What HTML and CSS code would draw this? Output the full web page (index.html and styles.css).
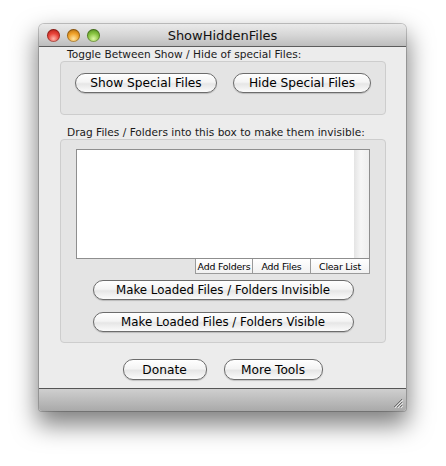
FILE: index.html
```html
<!DOCTYPE html>
<html lang="en">
<head>
    <meta charset="UTF-8">
    <title>ShowHiddenFiles</title>
    <link rel="stylesheet" href="styles.css">
</head>
<body>
    <div class="window">
        <div class="titlebar">
            <div class="lights">
                <span class="light red"></span>
                <span class="light orange"></span>
                <span class="light green"></span>
            </div>
            <div class="title">ShowHiddenFiles</div>
        </div>

        <div class="content">
            <div class="group-label">Toggle Between Show / Hide of special Files:</div>
            <div class="group toggle-group">
                <button class="aqua show-btn" type="button">Show Special Files</button>
                <button class="aqua hide-btn" type="button">Hide Special Files</button>
            </div>

            <div class="group-label second">Drag Files / Folders into this box to make them invisible:</div>
            <div class="group drop-group">
                <div class="file-list">
                    <div class="list-body"></div>
                    <div class="list-scroll"></div>
                </div>
                <div class="list-buttons">
                    <button class="small-btn" type="button">Add Folders</button>
                    <button class="small-btn" type="button">Add Files</button>
                    <button class="small-btn" type="button">Clear List</button>
                </div>
                <button class="aqua wide-btn" type="button">Make Loaded Files / Folders Invisible</button>
                <button class="aqua wide-btn" type="button">Make Loaded Files / Folders Visible</button>
            </div>

            <div class="footer-buttons">
                <button class="aqua donate-btn" type="button">Donate</button>
                <button class="aqua tools-btn" type="button">More Tools</button>
            </div>
        </div>

        <div class="bottombar">
            <svg class="grip" width="12" height="12" viewBox="0 0 12 12">
                <!-- resize grip -->
                <path d="M11 3 L3 11 M11 6 L6 11 M11 9 L9 11" stroke="#6f6f6f" stroke-width="1"/>
                <path d="M12 4 L4 12 M12 7 L7 12 M12 10 L10 12" stroke="#e4e4e4" stroke-width="1"/>
            </svg>
        </div>
    </div>
</body>
</html>
```

FILE: styles.css
```css
html {
    height: 100%;
}

body {
    margin: 0;
    min-height: 100%;
    box-sizing: border-box;
    padding: 24px 0 0 39px;
    background-color: #ffffff;
    font-family: "Lucida Grande", "DejaVu Sans", sans-serif;
    color: #000;
}

.window {
    width: 367px;
    height: 387px;
    display: flex;
    flex-direction: column;
    border-radius: 5px 5px 3px 3px;
    box-shadow: 0 12px 24px 2px rgba(0, 0, 0, 0.5), 0 0 0 1px rgba(0, 0, 0, 0.2);
    overflow: hidden;
    background-color: #ececec;
}

.titlebar {
    height: 22px;
    display: flex;
    align-items: center;
    position: relative;
    background: linear-gradient(to bottom, #eaeaea, #d6d6d6 50%, #bdbdbd);
    border-bottom: 1px solid #5c5c5c;
}

.lights {
    display: flex;
    gap: 7px;
    padding-left: 8px;
    margin-top: 1px;
}

.light {
    width: 13px;
    height: 13px;
    border-radius: 50%;
    box-shadow: inset 0 0 0 1px rgba(0, 0, 0, 0.3);
}

.red {
    background: radial-gradient(circle at 50% 75%, #ffb3a8 0%, #e8443a 45%, #a3110b 100%);
}

.orange {
    background: radial-gradient(circle at 50% 75%, #ffe4a0 0%, #f1a32b 45%, #a15b05 100%);
}

.green {
    background: radial-gradient(circle at 50% 75%, #dcf7a4 0%, #8ac543 45%, #3f7d12 100%);
}

.title {
    position: absolute;
    left: 0;
    right: 0;
    text-align: center;
    font-size: 13px;
    color: #111;
    pointer-events: none;
}

.content {
    flex: 1;
    padding: 0 20px 0 21px;
}

.group-label {
    font-size: 10.6px;
    height: 14px;
    line-height: 14px;
    padding-left: 7px;
    color: #1a1a1a;
}

.group-label.second {
    margin-top: 10px;
}

.group {
    background-color: #e4e4e4;
    border: 1px solid #cdcdcd;
    border-radius: 4px;
    box-sizing: border-box;
}

.toggle-group {
    height: 54px;
    display: flex;
    align-items: flex-start;
    gap: 16px;
    padding: 11px 0 0 14px;
}

.aqua {
    font-family: "Lucida Grande", "DejaVu Sans", sans-serif;
    font-size: 12.2px;
    color: #000;
    height: 20px;
    padding: 0;
    white-space: nowrap;
    border: 1px solid #6c6c6c;
    border-radius: 10px;
    background: linear-gradient(to bottom, #ffffff, #f4f4f4 45%, #e6e6e6 55%, #fbfbfb);
    box-shadow: 0 1px 1px rgba(0, 0, 0, 0.18);
    cursor: pointer;
}

.show-btn {
    width: 142px;
}

.hide-btn {
    width: 138px;
}

.drop-group {
    height: 204px;
    display: flex;
    flex-direction: column;
    align-items: center;
    padding-top: 9px;
}

.file-list {
    width: 294px;
    height: 110px;
    box-sizing: border-box;
    border: 1px solid #8e8e8e;
    display: flex;
    background-color: #fff;
}

.list-body {
    flex: 1;
}

.list-scroll {
    width: 15px;
    background: linear-gradient(to right, #e4e4e4, #f6f6f6 45%, #eeeeee);
}

.list-buttons {
    width: 294px;
    display: flex;
    justify-content: flex-end;
}

.small-btn {
    font-family: "Lucida Grande", "DejaVu Sans", sans-serif;
    font-size: 9.4px;
    letter-spacing: -0.2px;
    white-space: nowrap;
    color: #000;
    width: 58px;
    height: 15px;
    padding: 0;
    border: 1px solid #9a9a9a;
    border-top: none;
    border-left: none;
    background: linear-gradient(to bottom, #ffffff, #f1f1f1);
}

.small-btn:first-child {
    border-left: 1px solid #9a9a9a;
}

.small-btn:last-child {
    width: 59px;
}

.wide-btn {
    width: 261px;
    font-size: 11.8px;
    margin-top: 6px;
}

.wide-btn + .wide-btn {
    margin-top: 12px;
}

.footer-buttons {
    display: flex;
    justify-content: center;
    gap: 17px;
    margin-top: 16px;
    padding-right: 1px;
}

.donate-btn {
    width: 84px;
    height: 21px;
}

.tools-btn {
    width: 99px;
    height: 21px;
}

.bottombar {
    height: 22px;
    border-top: 1px solid #555;
    background: linear-gradient(to bottom, #cfcfcf, #a9a9a9);
    display: flex;
    justify-content: flex-end;
    align-items: flex-end;
}

.grip {
    margin: 0 3px 3px 0;
}
```
